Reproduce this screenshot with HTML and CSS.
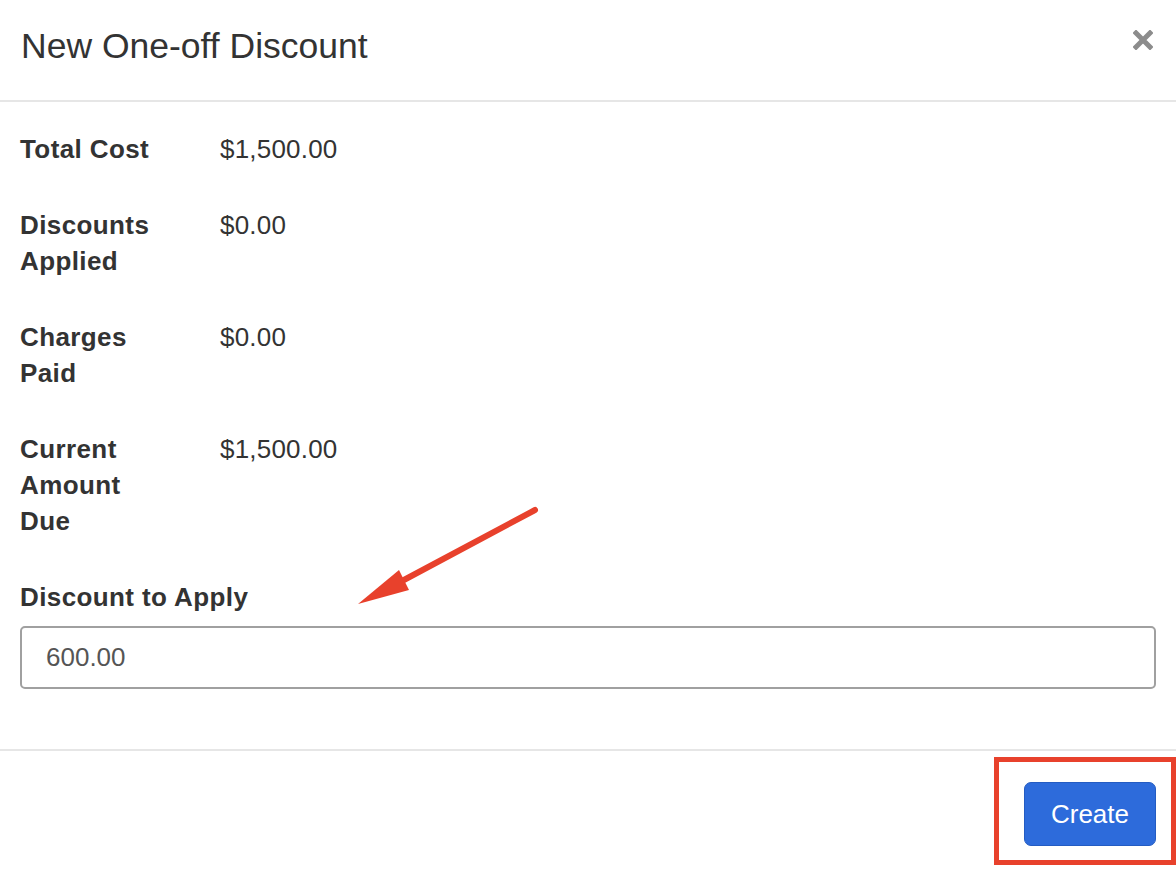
FILE: index.html
```html
<!DOCTYPE html>
<html lang="en">
<head>
  <meta charset="UTF-8">
  <meta name="viewport" content="width=device-width, initial-scale=1.0">
  <title>New One-off Discount</title>
  <link rel="stylesheet" href="styles.css">
</head>
<body>

<div class="modal">
  <header class="modal-header">
    <h1>New One-off Discount</h1>
    <button class="close-button" aria-label="Close">
      <svg width="20" height="20" viewBox="0 0 20 20">
        <path d="M3 3 L17 17 M17 3 L3 17" stroke="#8c8c8c" stroke-width="5" stroke-linecap="square"/>
      </svg>
    </button>
  </header>

  <section class="modal-body">
    <div class="row">
      <div class="label">Total Cost</div>
      <div class="value">$1,500.00</div>
    </div>
    <div class="row">
      <div class="label">Discounts Applied</div>
      <div class="value">$0.00</div>
    </div>
    <div class="row">
      <div class="label">Charges Paid</div>
      <div class="value">$0.00</div>
    </div>
    <div class="row">
      <div class="label">Current Amount Due</div>
      <div class="value">$1,500.00</div>
    </div>

    <div class="form-group">
      <label for="discount">Discount to Apply</label>
      <input type="text" id="discount" value="600.00">
    </div>
  </section>

  <footer class="modal-footer">
    <button class="create-button">Create</button>
  </footer>
</div>

<!-- anotaciones -->
<svg class="arrow" width="200" height="115" viewBox="0 0 200 115">
  <line x1="185" y1="10" x2="52" y2="81" stroke="#e8412c" stroke-width="6" stroke-linecap="round"/>
  <polygon points="8,104 49,70 59,90" fill="#e8412c"/>
</svg>
<div class="highlight"></div>

</body>
</html>
```

FILE: styles.css
```css
body {
  font-family: "Liberation Sans", Arial, sans-serif;
  margin: 0;
  padding: 0;
  background: white;
  color: #333;
  width: 1176px;
  height: 872px;
  overflow: hidden;
  position: relative;
}
.modal {
  display: flex;
  flex-direction: column;
}
.modal-header {
  display: flex;
  justify-content: space-between;
  align-items: flex-start;
  padding: 26px 23px 33px 21px;
  border-bottom: 2px solid #e6e6e6;
}
.modal-header h1 {
  margin: 0;
  font-size: 35.5px;
  font-weight: normal;
  line-height: 41px;
  color: #333;
}
.close-button {
  background: transparent;
  border: none;
  cursor: pointer;
  padding: 0;
  margin-top: 4px;
  width: 20px;
  height: 20px;
}
.close-button svg {
  display: block;
}
.modal-body {
  padding: 29px 20px 60px 20px;
}
.row {
  display: flex;
  font-size: 26px;
  line-height: 36px;
  margin-bottom: 40px;
}
.label {
  width: 200px;
  font-weight: bold;
  letter-spacing: 0.4px;
  padding-right: 50px;
  box-sizing: border-box;
}
.value {
  flex: 1;
  letter-spacing: 0.2px;
}
.form-group {
  display: flex;
  flex-direction: column;
}
.form-group label {
  font-size: 26px;
  line-height: 36px;
  font-weight: bold;
  letter-spacing: 0.4px;
  margin-bottom: 11px;
}
.form-group input {
  height: 63px;
  box-sizing: border-box;
  border: 2px solid #a0a0a0;
  border-radius: 5px;
  padding: 0 24px;
  font-family: "Liberation Sans", Arial, sans-serif;
  font-size: 26px;
  color: #555;
}
.modal-footer {
  display: flex;
  justify-content: flex-end;
  padding: 31px 20px 26px 20px;
  border-top: 2px solid #e6e6e6;
}
.create-button {
  background-color: #2d6bdb;
  border: 1px solid #245cc2;
  border-radius: 7px;
  color: white;
  width: 132px;
  height: 64px;
  font-family: "Liberation Sans", Arial, sans-serif;
  font-size: 26px;
  cursor: pointer;
}
.arrow {
  position: absolute;
  left: 350px;
  top: 500px;
}
.highlight {
  position: absolute;
  left: 994px;
  top: 757px;
  width: 182px;
  height: 108px;
  box-sizing: border-box;
  border: 5px solid #e8412c;
}
```
